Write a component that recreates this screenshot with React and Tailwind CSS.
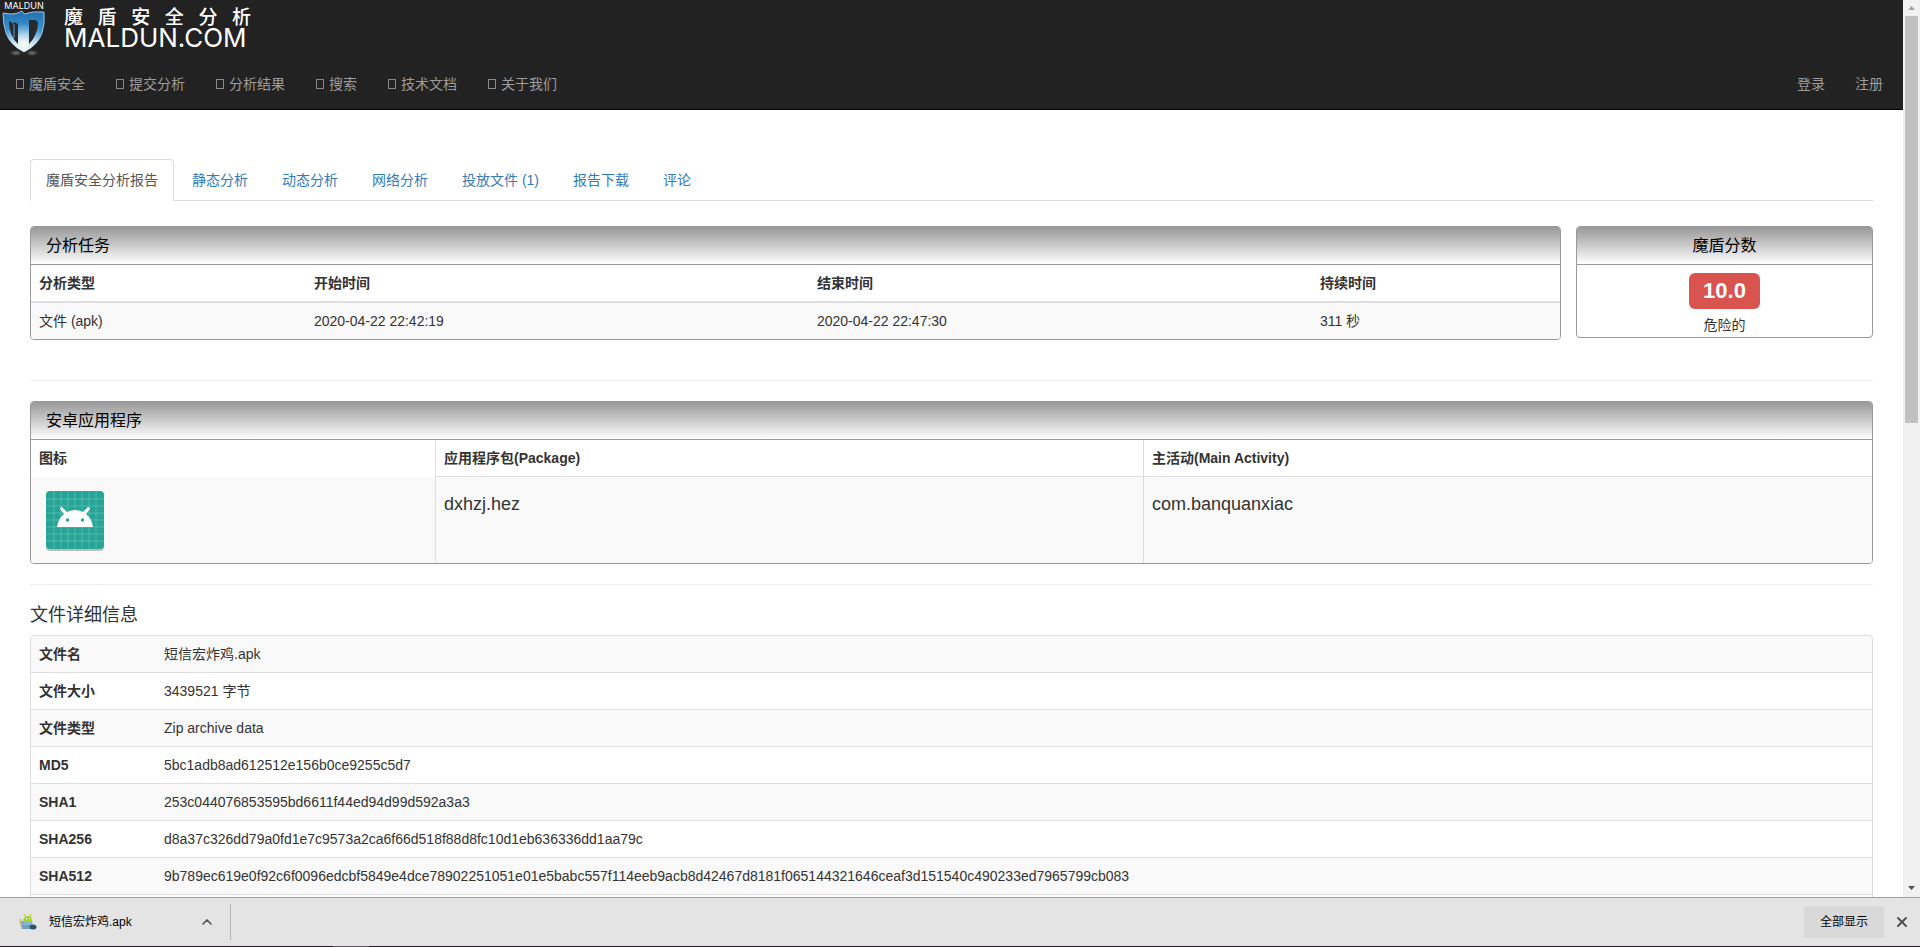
import { useState } from 'react';
import { ChevronUp, X } from 'lucide-react';

const menu = ['魔盾安全', '提交分析', '分析结果', '搜索', '技术文档', '关于我们'];

const tabs = ['魔盾安全分析报告', '静态分析', '动态分析', '网络分析', '投放文件 (1)', '报告下载', '评论'];

const fileInfo = [
  ['文件名', '短信宏炸鸡.apk'],
  ['文件大小', '3439521 字节'],
  ['文件类型', 'Zip archive data'],
  ['MD5', '5bc1adb8ad612512e156b0ce9255c5d7'],
  ['SHA1', '253c044076853595bd6611f44ed94d99d592a3a3'],
  ['SHA256', 'd8a37c326dd79a0fd1e7c9573a2ca6f66d518f88d8fc10d1eb636336dd1aa79c'],
  ['SHA512', '9b789ec619e0f92c6f0096edcbf5849e4dce78902251051e01e5babc557f114eeb9acb8d42467d8181f065144321646ceaf3d151540c490233ed7965799cb083'],
];

function Shield() {
  return (
    <svg viewBox="0 0 44 46" className="h-[46px] w-11" aria-hidden="true">
      <defs>
        <linearGradient id="shield" x1="0" y1="0" x2="0" y2="1">
          <stop offset="0" stopColor="#1f6fb2" />
          <stop offset="0.5" stopColor="#3f97d0" />
          <stop offset="1" stopColor="#d6e8f0" />
        </linearGradient>
        <radialGradient id="shine" cx="0.5" cy="0.8" r="0.5">
          <stop offset="0" stopColor="#fffff4" stopOpacity="0.95" />
          <stop offset="1" stopColor="#ffffff" stopOpacity="0" />
        </radialGradient>
        <radialGradient id="ground">
          <stop offset="0" stopColor="#777777" />
          <stop offset="1" stopColor="#222222" />
        </radialGradient>
      </defs>
      <ellipse cx="14" cy="43" rx="6" ry="3" fill="url(#ground)" />
      <ellipse cx="30" cy="43" rx="6" ry="3" fill="url(#ground)" />
      <path d="M1 3Q7 4 10 4Q15 4 20 1L22 4Q30 1 42 2Q43 14 40 23Q36 35 22 42Q8 35 4 23Q1 14 1 3Z" fill="url(#shield)" stroke="#9cc3dd" strokeWidth="1" />
      <path d="M1 3Q7 4 10 4Q15 4 20 1L22 4Q30 1 42 2Q43 14 40 23Q36 35 22 42Q8 35 4 23Q1 14 1 3Z" fill="url(#shine)" />
      <path d="M7 11L12 14V12L16 14V34Q7 26 7 11Z" fill="#252a2e" />
      <path d="M12 14V28" stroke="#5ea6d4" strokeWidth="1" />
      <path d="M27 10H32Q36 10 36 14Q35 26 27 34Z" fill="#252a2e" />
    </svg>
  );
}

function AppIcon() {
  const lines = [8, 15, 22, 29, 36, 43, 50];
  return (
    <svg viewBox="0 0 72 72" className="h-[72px] w-[72px]" role="img" aria-label="dxhzj.hez">
      <rect x="7" y="9" width="58" height="58" rx="4" fill="#b9c0bf" />
      <rect x="7" y="7" width="58" height="58" rx="4" fill="#26a596" />
      {lines.map((n) => (
        <path key={n} d={`M${7 + n} 7V65M7 ${7 + n}H65`} stroke="#4fb9ac" strokeWidth="1" />
      ))}
      <path d="M18 43Q19 35 25 30L21 25Q21 23 23 23L28 28Q36 24 44 28L49 23Q51 23 51 25L47 30Q53 35 54 43Z" fill="#ffffff" />
      <circle cx="28.5" cy="36" r="1.7" fill="#26a596" />
      <circle cx="43.5" cy="36" r="1.7" fill="#26a596" />
    </svg>
  );
}

function ApkIcon() {
  return (
    <svg viewBox="0 0 18 18" className="h-[18px] w-[18px]" aria-hidden="true">
      <path d="M2 8H13L14 16H3Z" fill="#6d9fc8" />
      <path d="M1 6L3 16" stroke="#c9b86a" strokeWidth="1.5" />
      <path d="M4 9Q4 3 9 3Q13 3 13 9Z" fill="#a4d61e" />
      <path d="M5 1L7 4M12 1L11 4" stroke="#a4d61e" strokeWidth="1" />
      <path d="M4 9H13V12H4Z" fill="#86b6d6" />
      <circle cx="7.5" cy="5.8" r="0.7" fill="#fff" />
      <circle cx="10.500" cy="5.8" r="0.7" fill="#fff" />
      <ellipse cx="14" cy="14" rx="3.500" ry="2.500" fill="#2b5266" />
    </svg>
  );
}

function Panel({ title, center, className, children }) {
  return (
    <section className={`overflow-hidden rounded border border-[#999] ${className || ''}`}>
      <h3 className={`h-[38px] border-b border-[#999] bg-linear-to-b from-[#999] to-white px-[15px] text-base leading-[38px] text-black ${center ? 'text-center' : ''}`}>
        {title}
      </h3>
      {children}
    </section>
  );
}

function Navbar() {
  return (
    <header className="border-b border-black bg-[#222]">
      <a href="#" className="flex h-[58px] w-fit items-start text-white">
        <div className="flex w-12 flex-col items-center pt-0.5">
          <span className="h-2 font-[Inter,sans-serif] text-[9px] leading-2">MALDUN</span>
          <Shield />
        </div>
        <div className="ml-4 w-[187px] pt-2">
          <div className="flex justify-between text-[19px] font-medium leading-5">
            {[...'魔盾安全分析'].map((c) => <span key={c}>{c}</span>)}
          </div>
          <div className="font-[Inter,sans-serif] text-[26px] leading-5">MALDUN.COM</div>
        </div>
      </a>
      <nav className="flex h-[51px] items-center justify-between text-[#9d9d9d]">
        <ul className="flex">
          {menu.map((name) => (
            <li key={name}>
              <a href="#" className="flex items-center gap-1 px-[15px] hover:text-white">
                <span className="mx-px h-2.5 w-2 border border-[#8a8a8a]" />
                {name}
              </a>
            </li>
          ))}
        </ul>
        <ul className="flex pr-[5px]">
          <li><a href="#" className="px-[15px] hover:text-white">登录</a></li>
          <li><a href="#" className="px-[15px] hover:text-white">注册</a></li>
        </ul>
      </nav>
    </header>
  );
}

function Scrollbar() {
  return (
    <div className="flex w-[17px] shrink-0 flex-col items-center bg-[#f1f1f1]" aria-hidden="true">
      <svg viewBox="0 0 17 16" className="h-4 w-[17px]"><path d="M5 10L8.500 6L12 10Z" fill="#a3a3a3" /></svg>
      <div className="w-[13px] grow-47 bg-[#c1c1c1]" />
      <div className="grow-53" />
      <svg viewBox="0 0 17 16" className="h-4 w-[17px]"><path d="M5 5L8.500 9L12 5Z" fill="#505050" /></svg>
    </div>
  );
}

function DownloadBar() {
  return (
    <footer className="shrink-0 border-t border-[#a0a0a0] bg-[#e4e4e4] text-xs text-black">
      <div className="flex h-12 items-center pr-2.5">
        <button className="flex h-9 w-[231px] items-center border-r border-[#b5b5b5] pl-[19px] pr-[15px] text-left">
          <ApkIcon />
          <span className="ml-3 grow">短信宏炸鸡.apk</span>
          <ChevronUp size={16} strokeWidth={2.5} color="#555" />
        </button>
        <button className="ml-auto h-8 w-20 rounded-xs bg-[#d9d9d9]">全部显示</button>
        <button className="ml-2.5" aria-label="关闭"><X size={16} strokeWidth={3} color="#505050" /></button>
      </div>
      <div className="h-px bg-[#251a33]">
        <div className="ml-[333px] h-px w-9 bg-[#5c5468]" />
      </div>
    </footer>
  );
}

function App() {
  const [active, setActive] = useState(0);

  return (
    <div className="flex h-screen flex-col bg-white font-['Liberation_Sans','Noto_Sans_CJK_SC',sans-serif] text-sm leading-5 text-[#333]">
      <div className="flex min-h-0 grow">
        <div className="grow overflow-hidden">
          <Navbar />
          <main className="px-[30px] pt-[49px]">
            <div className="flex gap-0.5 border-b border-[#ddd]" role="tablist">
              {tabs.map((tab, i) => (
                <button
                  key={tab}
                  role="tab"
                  aria-selected={active === i}
                  onClick={() => setActive(i)}
                  className={`-mb-px rounded-t border px-[15px] py-2.5 ${active === i ? 'border-[#ddd] border-b-white bg-white text-[#555]' : 'border-transparent text-[#337ab7]'}`}
                >
                  {tab}
                </button>
              ))}
            </div>

            <div className="mt-[25px] flex items-start gap-[15px]">
              <Panel title="分析任务" className="grow">
                <table className="w-full text-left">
                  <thead>
                    <tr className="border-b-2 border-[#ddd]">
                      <th className="p-2">分析类型</th>
                      <th className="p-2">开始时间</th>
                      <th className="p-2">结束时间</th>
                      <th className="p-2">持续时间</th>
                    </tr>
                  </thead>
                  <tbody>
                    <tr className="bg-[#f9f9f9]">
                      <td className="p-2">文件 (apk)</td>
                      <td className="p-2">2020-04-22 22:42:19</td>
                      <td className="p-2">2020-04-22 22:47:30</td>
                      <td className="p-2">311 秒</td>
                    </tr>
                  </tbody>
                </table>
              </Panel>
              <Panel title="魔盾分数" center className="w-[297px] shrink-0">
                <div className="flex flex-col items-center gap-1.5 pt-2 pb-0.5">
                  <span className="rounded-md bg-[#d9534f] px-3.5 text-[22px] font-bold leading-9 text-white">10.0</span>
                  <span>危险的</span>
                </div>
              </Panel>
            </div>

            <hr className="mt-10 mb-5 border-[#eee]" />

            <Panel title="安卓应用程序">
              <table className="w-full text-left">
                <thead>
                  <tr>
                    <th className="py-2 pl-2">图标</th>
                    <th className="border-b border-l border-[#ddd] p-2">应用程序包(Package)</th>
                    <th className="border-b border-l border-[#ddd] p-2">主活动(Main Activity)</th>
                  </tr>
                </thead>
                <tbody>
                  <tr className="bg-[#f9f9f9] align-top">
                    <td className="py-[7px] pr-[7px] pl-2"><AppIcon /></td>
                    <td className="border-l border-[#ddd] px-2 py-[17px] text-lg leading-5">dxhzj.hez</td>
                    <td className="border-l border-[#ddd] px-2 py-[17px] text-lg leading-5">com.banquanxiac</td>
                  </tr>
                </tbody>
              </table>
            </Panel>

            <hr className="my-5 border-[#eee]" />

            <h4 className="mb-2.5 text-lg leading-5">文件详细信息</h4>
            <div className="overflow-hidden rounded border border-[#ddd] pb-9">
              <table className="w-full text-left">
                <tbody>
                  {fileInfo.map(([name, value]) => (
                    <tr key={name} className="border-b border-[#ddd] odd:bg-[#f9f9f9]">
                      <th className="w-[125px] p-2">{name}</th>
                      <td className="p-2">{value}</td>
                    </tr>
                  ))}
                </tbody>
              </table>
            </div>
          </main>
        </div>
        <Scrollbar />
      </div>
      <DownloadBar />
    </div>
  );
}

export default App;
